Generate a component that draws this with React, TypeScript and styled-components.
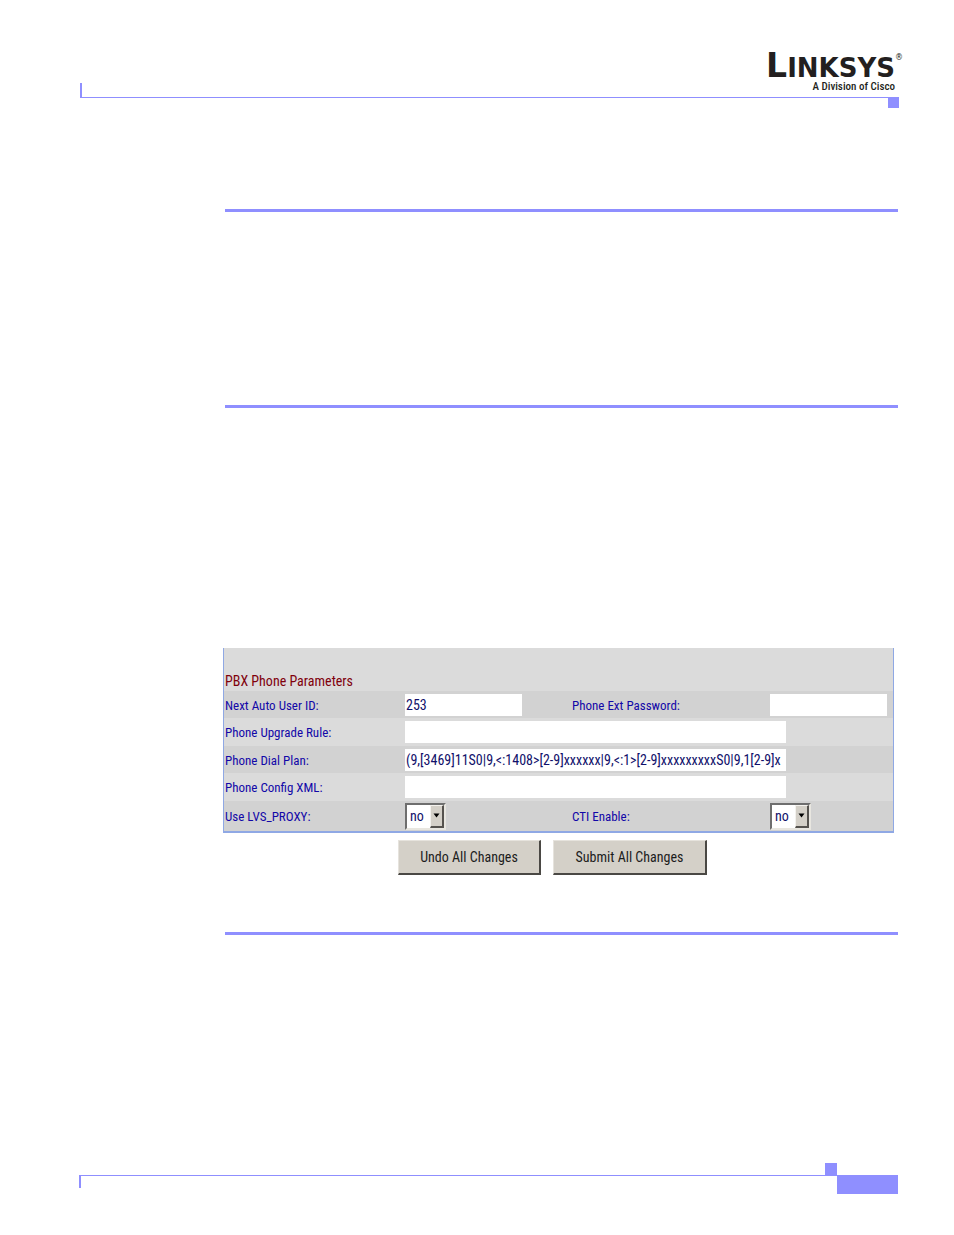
import React from 'react';
import styled, { createGlobalStyle } from 'styled-components';

const accent = '#8f8fff';
const uiFont = '"Roboto Condensed", Roboto, sans-serif';

const GlobalStyle = createGlobalStyle`
  *, *::before, *::after { box-sizing: border-box; }
  body { margin: 0; background: #fff; }
`;

const Page = styled.div`
  display: flex;
  flex-direction: column;
  min-height: 100vh;
  padding: 48px 55px 41px 80px;
  font-family: ${uiFont};
`;

const Header = styled.header`
  display: flex;
  flex-direction: column;
`;

const Brand = styled.div`
  display: flex;
  flex-direction: column;
  align-items: flex-end;
  height: 49px;
  color: #231f20;
`;

const Wordmark = styled.div`
  display: flex;
  align-items: baseline;
  height: 32px;
  padding-top: 4px;
  line-height: 28px;
  font-family: "DejaVu Sans", sans-serif;
  font-weight: 700;
  font-size: 26px;
`;

const Initial = styled.span`
  font-size: 33px;
`;

const Registered = styled.sup`
  align-self: flex-start;
  width: 4px;
  font-size: 8px;
  line-height: 12px;
  font-weight: 400;
`;

const Tagline = styled.div`
  padding-right: 4px;
  font-weight: 500;
  font-size: 11px;
  line-height: 14px;
`;

const HeaderRule = styled.div`
  display: flex;
  align-items: flex-start;
  height: 11px;
`;

const HeaderLine = styled.div`
  flex: 1;
  height: 15px;
  margin-top: -14px;
  border-left: 2px solid ${accent};
  border-bottom: 1px solid ${accent};
`;

const HeaderSquare = styled.div`
  width: 11px;
  height: 11px;
  background: ${accent};
`;

const Content = styled.main`
  display: flex;
  flex-direction: column;
  flex: 1;
  padding: 101px 1px 0 143px;
`;

const Rule = styled.hr<{ $after: number }>`
  align-self: stretch;
  width: auto;
  height: 3px;
  margin: 0 0 ${({ $after }) => $after}px 2px;
  border: 0;
  background: ${accent};
`;

const Form = styled.form`
  margin: 0 4px 57px 0;
`;

const Panel = styled.fieldset`
  margin: 0;
  padding: 0;
  min-width: 0;
  border: solid #8fa8e4;
  border-width: 0 1px 2px;
  background: #dbdbdb;
`;

const PanelTitle = styled.h2`
  margin: 0;
  padding: 22px 0 0 1px;
  height: 43px;
  color: #80000c;
  font-weight: 400;
  font-size: 14px;
  line-height: 22px;
`;

const rowHeight = ({ $shaded, $tall }: { $shaded?: boolean; $tall?: boolean }) =>
  $tall ? 30 : $shaded ? 27 : 28;

const Row = styled.div<{ $shaded?: boolean; $tall?: boolean }>`
  display: grid;
  grid-template-columns: 180fr 167fr 198fr 123fr;
  align-items: center;
  height: ${rowHeight}px;
  padding-left: 1px;
  background: ${({ $shaded }) => ($shaded ? '#d2d2d2' : '#dbdbdb')};
`;

const Label = styled.label`
  padding-top: 2px;
  color: #1208a8;
  font-size: 13px;
  line-height: 20px;
`;

const TextInput = styled.input<{ $wide?: boolean }>`
  width: ${({ $wide }) => ($wide ? '381px' : '117px')};
  height: 22px;
  padding: 0 1px;
  border: 0;
  border-radius: 0;
  outline: 0;
  background: #fff;
  color: #10106a;
  font-family: ${uiFont};
  font-size: 14px;
  ${({ $wide }) => $wide && 'grid-column: 2 / -1;'}
`;

const SelectBox = styled.div`
  display: flex;
  position: relative;
  width: 41px;
  height: 27px;
  border: 2px solid;
  border-color: #6e6e6e #e8e6e0 #e8e6e0 #6e6e6e;
  background: #fff;
`;

const Select = styled.select`
  appearance: none;
  width: 100%;
  padding: 0 0 0 3px;
  border: 0;
  outline: 0;
  background: transparent;
  color: #10106a;
  font-family: ${uiFont};
  font-size: 14px;
`;

const Arrow = styled.span`
  display: flex;
  position: absolute;
  top: 0;
  right: 0;
  bottom: 0;
  align-items: center;
  justify-content: center;
  width: 14px;
  border: 1px solid;
  border-width: 1px 2px 2px 1px;
  border-color: #f4f2ee #55524e #55524e #f4f2ee;
  background: #d4d0c8;
  pointer-events: none;
`;

const Actions = styled.div`
  display: flex;
  gap: 12px;
  padding: 7px 0 0 175px;
`;

const Button = styled.button<{ $width: number }>`
  width: ${({ $width }) => $width}px;
  height: 35px;
  padding: 0 0 1px;
  border: solid;
  border-width: 1px 2px 2px 1px;
  border-color: #e6e3dd #4a4844 #4a4844 #e6e3dd;
  border-radius: 0;
  background: #d4d0c8;
  color: #1c1c1c;
  font-family: ${uiFont};
  font-size: 14px;
  line-height: 20px;
`;

const Footer = styled.footer`
  display: flex;
  align-items: flex-end;
  height: 31px;
  margin: 0 1px 0 -1px;
`;

const FooterLine = styled.div`
  flex: 1;
  height: 13px;
  margin-bottom: 6px;
  border-top: 1px solid ${accent};
  border-left: 2px solid ${accent};
`;

const FooterSquare = styled.div`
  align-self: flex-start;
  width: 12px;
  height: 13px;
  background: ${accent};
`;

const FooterBlock = styled.div`
  width: 61px;
  height: 19px;
  background: ${accent};
`;

function YesNo({ id }: { id: string }) {
  return (
    <SelectBox>
      <Select id={id} defaultValue="no">
        <option>no</option>
      </Select>
      <Arrow aria-hidden="true">
        <svg width="7" height="5" viewBox="0 0 7 5">
          <path d="M0.5 0.5h6L3.5 4.5z" fill="#000" />
        </svg>
      </Arrow>
    </SelectBox>
  );
}

export default function App() {
  return (
    <Page>
      <GlobalStyle />
      <Header>
        <Brand>
          <Wordmark>
            <Initial>L</Initial>INKSYS<Registered>®</Registered>
          </Wordmark>
          <Tagline>A Division of Cisco</Tagline>
        </Brand>
        <HeaderRule>
          <HeaderLine />
          <HeaderSquare />
        </HeaderRule>
      </Header>
      <Content>
        <Rule $after={193} />
        <Rule $after={240} />
        <Form onSubmit={(e) => e.preventDefault()}>
          <Panel>
            <PanelTitle>PBX Phone Parameters</PanelTitle>
            <Row $shaded>
              <Label htmlFor="next-id">Next Auto User ID:</Label>
              <TextInput id="next-id" defaultValue="253" />
              <Label htmlFor="password">Phone Ext Password:</Label>
              <TextInput id="password" type="password" />
            </Row>
            <Row>
              <Label htmlFor="upgrade">Phone Upgrade Rule:</Label>
              <TextInput id="upgrade" $wide />
            </Row>
            <Row $shaded>
              <Label htmlFor="dial-plan">Phone Dial Plan:</Label>
              <TextInput
                id="dial-plan"
                $wide
                defaultValue="(9,[3469]11S0|9,<:1408>[2-9]xxxxxx|9,<:1>[2-9]xxxxxxxxxS0|9,1[2-9]x"
              />
            </Row>
            <Row>
              <Label htmlFor="config">Phone Config XML:</Label>
              <TextInput id="config" $wide />
            </Row>
            <Row $shaded $tall>
              <Label htmlFor="proxy">Use LVS_PROXY:</Label>
              <YesNo id="proxy" />
              <Label htmlFor="cti">CTI Enable:</Label>
              <YesNo id="cti" />
            </Row>
          </Panel>
          <Actions>
            <Button type="reset" $width={143}>Undo All Changes</Button>
            <Button type="submit" $width={154}>Submit All Changes</Button>
          </Actions>
        </Form>
        <Rule $after={0} />
      </Content>
      <Footer>
        <FooterLine />
        <FooterSquare />
        <FooterBlock />
      </Footer>
    </Page>
  );
}
